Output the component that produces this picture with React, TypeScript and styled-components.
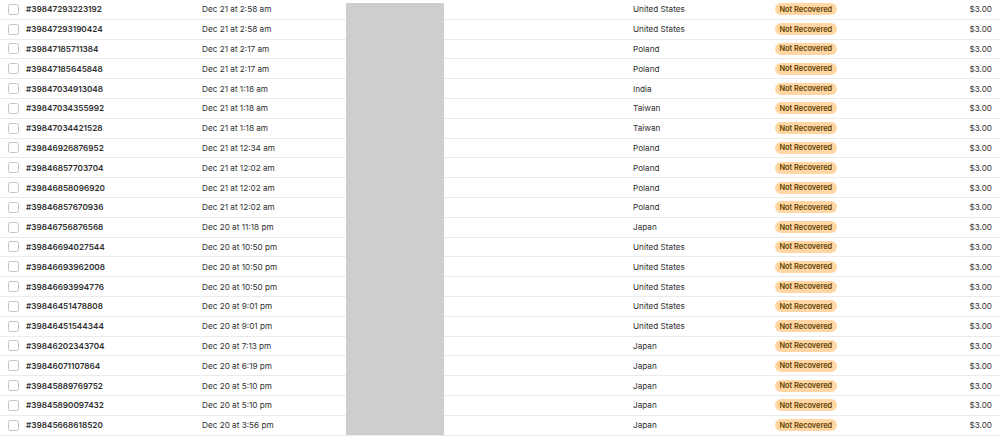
import React from "react";
import styled, { createGlobalStyle } from "styled-components";

const Global = createGlobalStyle`
  html, body { margin: 0; padding: 0; background: #ffffff; }
  body { font-family: Inter, "Noto Sans", sans-serif; -webkit-font-smoothing: antialiased; }
`;

const rows: [string, string, string][] = [
  ["#39847293223192", "Dec 21 at 2:58 am", "United States"],
  ["#39847293190424", "Dec 21 at 2:58 am", "United States"],
  ["#39847185711384", "Dec 21 at 2:17 am", "Poland"],
  ["#39847185645848", "Dec 21 at 2:17 am", "Poland"],
  ["#39847034913048", "Dec 21 at 1:18 am", "India"],
  ["#39847034355992", "Dec 21 at 1:18 am", "Taiwan"],
  ["#39847034421528", "Dec 21 at 1:18 am", "Taiwan"],
  ["#39846926876952", "Dec 21 at 12:34 am", "Poland"],
  ["#39846857703704", "Dec 21 at 12:02 am", "Poland"],
  ["#39846858096920", "Dec 21 at 12:02 am", "Poland"],
  ["#39846857670936", "Dec 21 at 12:02 am", "Poland"],
  ["#39846756876568", "Dec 20 at 11:18 pm", "Japan"],
  ["#39846694027544", "Dec 20 at 10:50 pm", "United States"],
  ["#39846693962008", "Dec 20 at 10:50 pm", "United States"],
  ["#39846693994776", "Dec 20 at 10:50 pm", "United States"],
  ["#39846451478808", "Dec 20 at 9:01 pm", "United States"],
  ["#39846451544344", "Dec 20 at 9:01 pm", "United States"],
  ["#39846202343704", "Dec 20 at 7:13 pm", "Japan"],
  ["#39846071107864", "Dec 20 at 6:19 pm", "Japan"],
  ["#39845889769752", "Dec 20 at 5:10 pm", "Japan"],
  ["#39845890097432", "Dec 20 at 5:10 pm", "Japan"],
  ["#39845668618520", "Dec 20 at 3:56 pm", "Japan"],
];

const Table = styled.div`
  position: relative;
  width: 1000px;
`;

const Row = styled.div`
  display: grid;
  grid-template-columns: 18px 176px 144px 287px 142px auto 1fr;
  align-items: center;
  height: 19.8px;
  box-sizing: border-box;
  padding: 0 8px;
  border-bottom: 1px solid #ebebeb;
  font-size: 8.2px;
  color: #303030;
  &:last-child { border-bottom: none; }
`;

const Check = styled.span`
  display: block;
  width: 9px;
  height: 9px;
  border: 1px solid #c4c4c4;
  border-radius: 2.5px;
  background: #fff;
`;

const OrderId = styled.span`
  font-weight: 600;
  color: #303030;
`;

const Cell = styled.span`
  color: #303030;
`;

const Badge = styled.span`
  justify-self: start;
  display: inline-flex;
  align-items: center;
  height: 12px;
  padding: 0 4.5px;
  border-radius: 6px;
  background: #ffd6a4;
  color: #5e4200;
  font-weight: 600;
  font-size: 7.4px;
`;

const Amount = styled.span`
  justify-self: end;
  color: #303030;
`;

const Redaction = styled.div`
  position: absolute;
  left: 346px;
  top: 3px;
  width: 98px;
  height: 432px;
  background: #cdcfcd;
`;

export default function App() {
  return (
    <>
      <Global />
      <Table>
        {rows.map(([id, date, country]) => (
          <Row key={id}>
            <Check />
            <OrderId>{id}</OrderId>
            <Cell>{date}</Cell>
            <Cell />
            <Cell>{country}</Cell>
            <Badge>Not Recovered</Badge>
            <Amount>$3.00</Amount>
          </Row>
        ))}
        <Redaction />
      </Table>
    </>
  );
}
